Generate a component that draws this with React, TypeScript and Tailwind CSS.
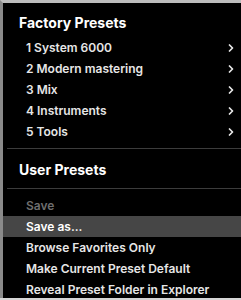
import { ChevronRight } from "lucide-react";

const factory = ["1 System 6000", "2 Modern mastering", "3 Mix", "4 Instruments", "5 Tools"];

function Item({ label, sub, muted, active }: { label: string; sub?: boolean; muted?: boolean; active?: boolean }) {
  return (
    <div
      className={`flex h-[21px] items-center justify-between pl-[23px] pr-[4px] text-[12px] font-semibold ${
        active ? "bg-[#464646] text-white" : muted ? "text-[#6e6e6e]" : "text-[#e6e6e6]"
      }`}
    >
      <span>{label}</span>
      {sub && <ChevronRight size={12} strokeWidth={3.5} className="text-[#e8e8e8]" />}
    </div>
  );
}

export default function App() {
  return (
    <div className="h-[300px] w-[241px] overflow-hidden bg-[#d6d6d6] pb-[2px]">
      <div
        className="h-full border-l-[3px] border-t-[3px] border-l-[#8a8a8a] border-t-[#bcbcbc] bg-black"
        style={{ fontFamily: "Inter, 'Liberation Sans', sans-serif" }}
      >
        <div className="pl-[16px] pt-[9px] pb-[3px] text-[14px] font-bold leading-[22px] text-white">
          Factory Presets
        </div>
        <div className="pb-[6px]">
          {factory.map((f) => (
            <Item key={f} label={f} sub />
          ))}
        </div>
        <div className="ml-[4px] h-px bg-[#3c3c3c]" />
        <div className="pl-[16px] pt-[10px] pb-[7px] text-[14px] font-bold leading-[22px] text-white">
          User Presets
        </div>
        <div className="ml-[4px] h-px bg-[#3c3c3c]" />
        <div className="pt-[6px]">
          <Item label="Save" muted />
          <Item label="Save as..." active />
          <Item label="Browse Favorites Only" />
          <Item label="Make Current Preset Default" />
          <Item label="Reveal Preset Folder in Explorer" />
        </div>
      </div>
    </div>
  );
}
